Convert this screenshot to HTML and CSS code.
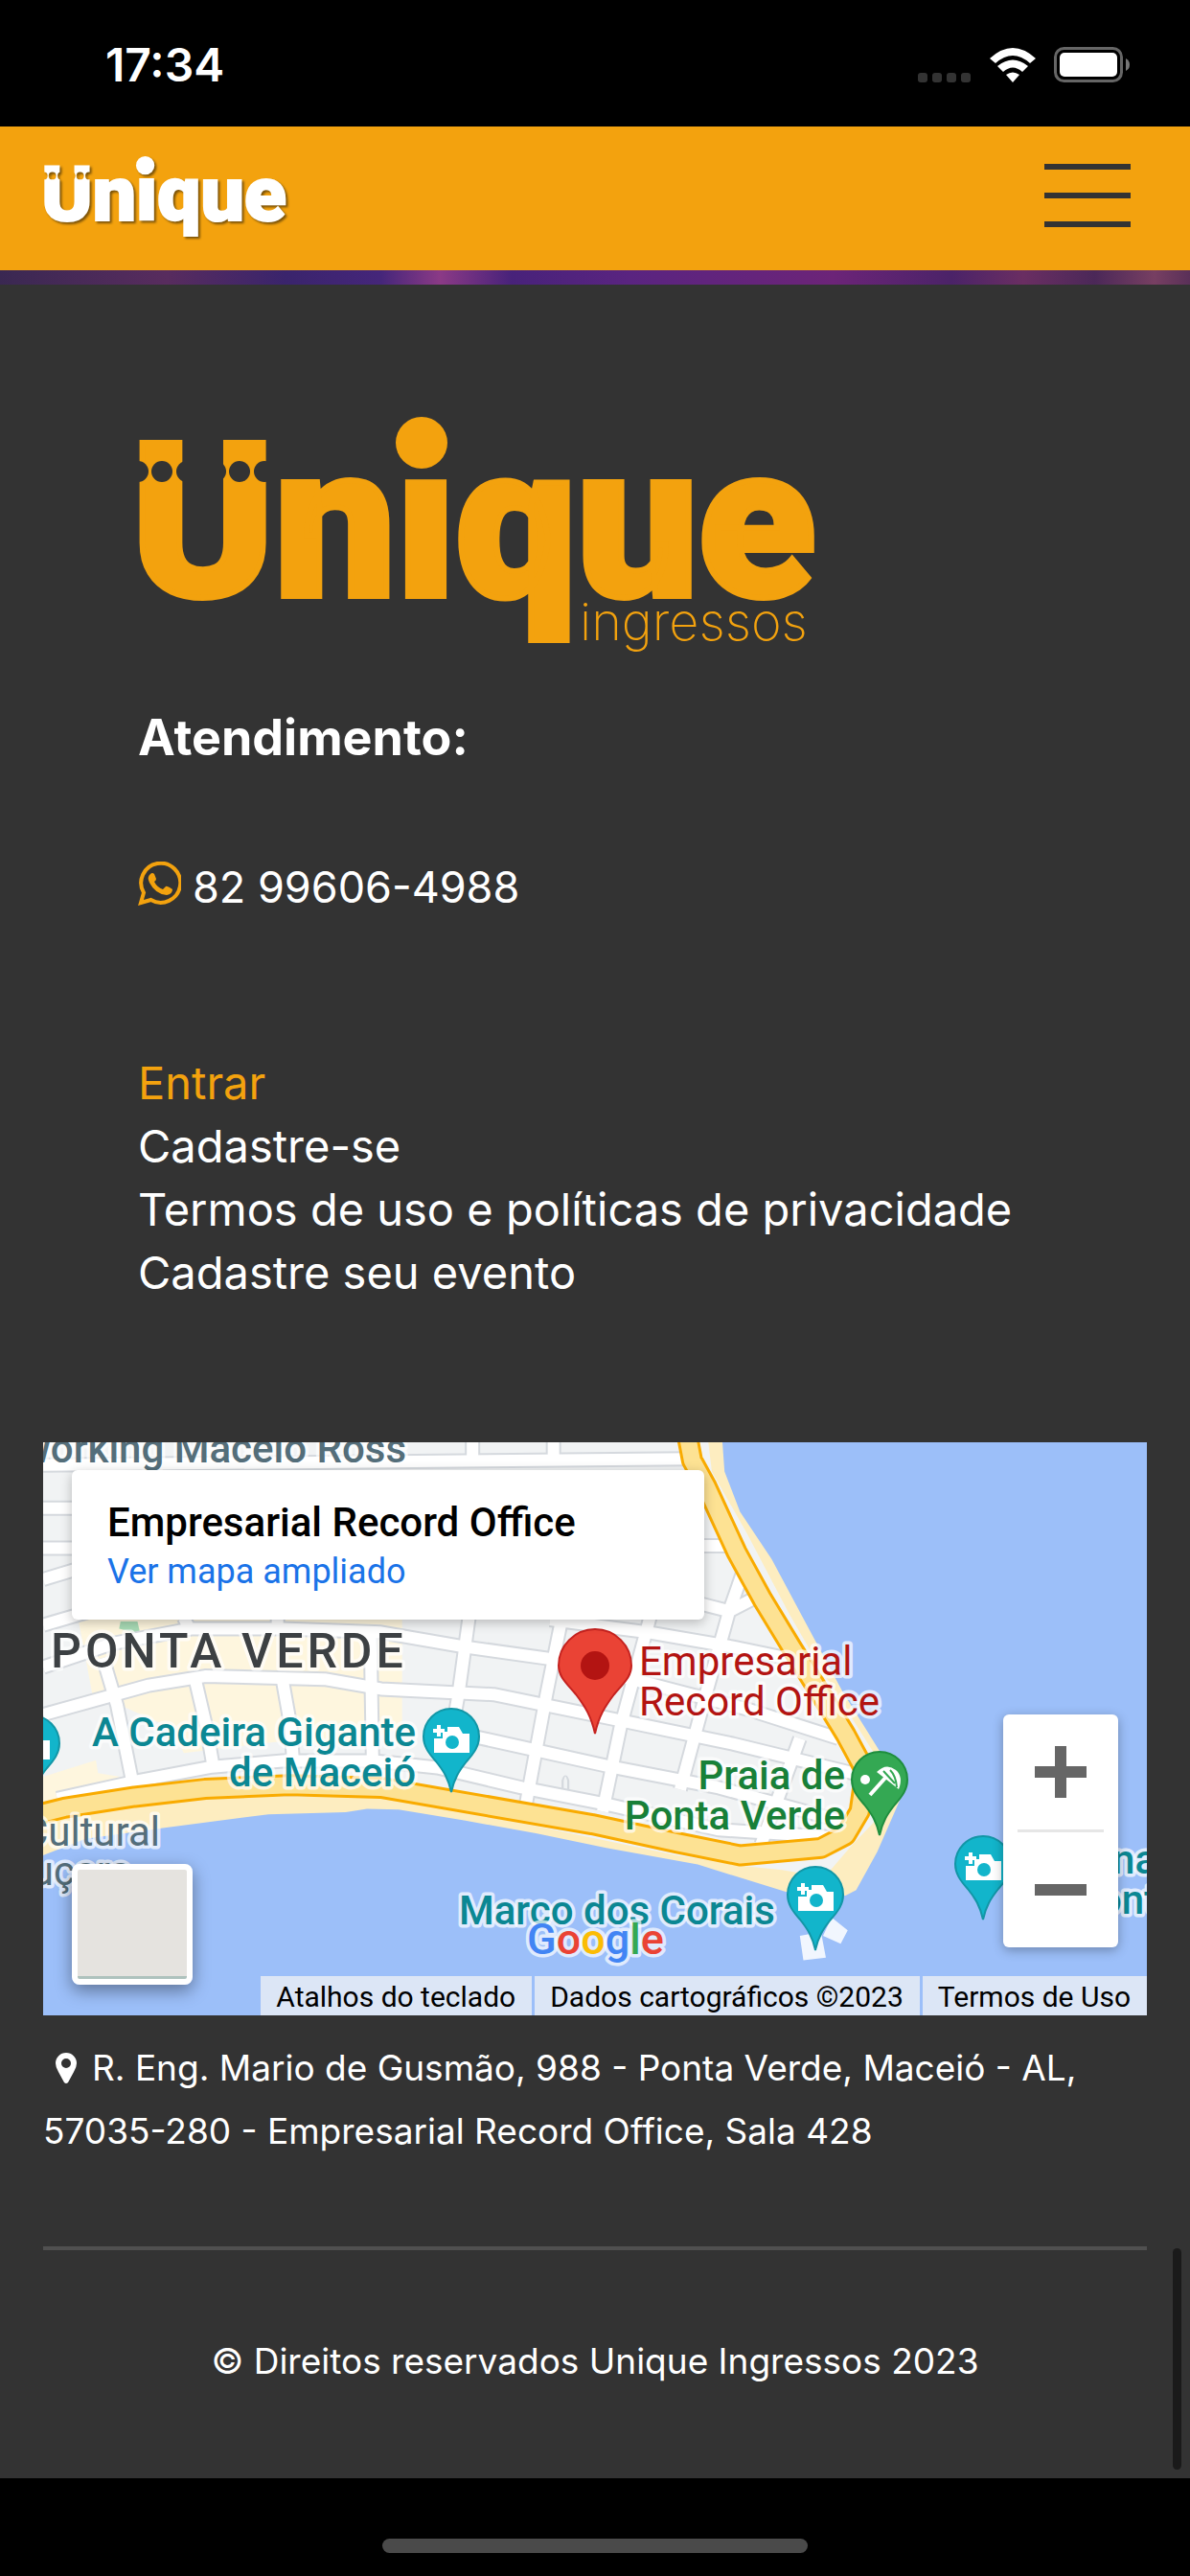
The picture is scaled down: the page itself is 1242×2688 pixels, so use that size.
FILE: index.html
```html
<!DOCTYPE html>
<html lang="pt-BR">
<head>
<meta charset="utf-8">
<meta name="viewport" content="width=device-width, initial-scale=1">
<title>Unique Ingressos</title>
<link rel="stylesheet" href="styles.css">
</head>
<body>
<div class="status">
  <span class="time">17:34</span>
  <div class="status-icons">
    <svg class="signal" viewBox="0 0 56 36" aria-hidden="true"><g fill="#333"><rect x="0" y="26" width="10" height="10" rx="3"/><rect x="15" y="26" width="10" height="10" rx="3"/><rect x="30" y="26" width="10" height="10" rx="3"/><rect x="45" y="26" width="10" height="10" rx="3"/></g></svg>
    <svg class="wifi" viewBox="0 0 48 36" aria-hidden="true"><g fill="#fff"><path d="M0 11Q24-11 48 11L42 16Q24 0 6 16Z"/><path d="M8 19Q24 6 40 19L34 25Q24 16 14 25Z"/><path d="M17 28Q24 23 31 28L24 36Z"/></g></svg>
    <svg class="battery" viewBox="0 0 80 38" aria-hidden="true"><rect x="1.500" y="1.500" width="69" height="34" rx="9" fill="none" stroke="#666" stroke-width="3"/><rect x="6" y="6" width="60" height="25" rx="5" fill="#fff"/><path d="M75 12q4 2 4 6.500t-4 6.500z" fill="#777"/></svg>
  </div>
</div>
<header class="topbar">
  <a class="brand" href="#" aria-label="Unique">
    <svg viewBox="0 0 706 246" aria-hidden="true">
      <mask id="cut-top" maskUnits="userSpaceOnUse" x="-10" y="-10" width="740" height="270">
        <rect x="-10" y="-10" width="740" height="270" fill="#fff"/>
        <g fill="#000"><rect x="256" y="0" width="74" height="64"/><circle cx="0" cy="57" r="11"/><circle cx="25" cy="57" r="11"/><circle cx="51" cy="57" r="11"/><circle cx="81" cy="57" r="11"/><circle cx="106" cy="57" r="11"/><circle cx="132" cy="57" r="11"/></g>
      </mask>
      <g fill="#fff" stroke="#fff"><text class="logo-word" x="-7" y="187" mask="url(#cut-top)">Unique</text><circle cx="296" cy="27" r="27" stroke="none"/></g>
    </svg>
  </a>
  <button class="menu" type="button" aria-label="Menu"><span></span><span></span><span></span></button>
</header>
<div class="banner"></div>
<footer class="footer">
  <section class="contact">
    <svg class="logo" viewBox="0 0 706 246" role="img" aria-label="Unique Ingressos">
      <g fill="#f3a20e"><text class="logo-word" x="-7" y="187" stroke="#f3a20e" mask="url(#cut-top)">Unique</text><circle cx="296" cy="27" r="27"/><text class="logo-sub" x="461" y="233">ingressos</text></g>
    </svg>
    <h2>Atendimento:</h2>
    <a class="phone" href="tel:82996064988">
      <svg viewBox="0 0 45 46" aria-hidden="true"><path d="M3 43l3-10.500A20.500 20.500 0 1 1 13.500 40Z" fill="none" stroke="#f3a20e" stroke-width="4"/><path d="M13 13q2-2 4 0l2 5q0 2-2 3 3 6 9 8l3-3q1-1 7 3 0 5-6 6Q18 34 12 22q-3-6 1-9z" fill="#f3a20e"/></svg>
      <span>82 99606-4988</span>
    </a>
    <nav class="links">
      <a class="active" href="#">Entrar</a>
      <a href="#">Cadastre-se</a>
      <a href="#">Termos de uso e políticas de privacidade</a>
      <a href="#">Cadastre seu evento</a>
    </nav>
  </section>
  <div class="map">
    <svg class="map-art" viewBox="0 0 1152 598" preserveAspectRatio="xMidYMid slice" aria-hidden="true">
      <defs>
        <path id="drop" d="M0 0C-3-14-8-22-16-32-24-41-29-48-29-58A29 29 0 1 1 29-58C29-48 24-41 16-32 8-22 3-14 0 0Z"/>
        <g id="photo-pin">
          <use href="#drop" fill="#12b5cb" stroke="#1296a6" stroke-width="2"/>
          <path d="M-15-70h4v4h4v4h-4v4h-4v-4h-4v-4h4z" fill="#fff"/>
          <path d="M-4-68H8l4 7h7v20h-37v-15h9v-7h5z" fill="#fff"/>
          <circle cx="1" cy="-52" r="7" fill="#12b5cb"/>
        </g>
        <g id="streets">
          <path class="wide" d="M0 62L915 45"/>
          <path d="M610 0V40M725 0V40M492 0V40M0 180H60M0 290H60M0 375L60 340M0 500L80 455"/>
          <path d="M920 283H975M995 350L975 460 940 700 905 950M920 435L975 462 1015 422"/>
          <path class="wide" d="M0 615L100 550 210 510 340 510 480 520 600 560 730 595 840 650 1000 730 1130 810"/>
          <path class="wide" d="M0 745L150 665 230 640 400 648 480 675 640 690 830 765 980 825 1150 905"/>
          <path d="M20 975L130 928 240 888 340 872 470 872 560 890 680 945 800 990 960 1060 1120 1080"/>
          <path d="M600 800L800 885 960 945 1140 1040M720 485L860 520 980 560 1080 600"/>
          <path d="M85 590L105 720 130 960M200 480L210 520M215 640L232 780 242 890M333 480V510M340 650L352 780 355 870M465 520L468 870M605 480L590 690 580 800M737 480L715 690 685 1000M862 480L820 780 795 1010M1075 810L1020 1100"/>
        </g>
        <path id="avenue" d="M915 -20L922 50 942 120 985 300 1022 430 1063 560 1105 690 1140 800 1168 900 1160 1010 1140 1075 1105 1110 990 1130 900 1095 780 1045 480 945 350 938 230 948 130 970 30 1000 -20 1024"/>
      </defs>
      <rect width="1152" height="598" fill="#9cbff9"/>
      <g class="ground" transform="scale(.7347 .3814)">
        <path d="M0 0H965L968 80 990 190 1035 320 1085 500 1135 680 1190 850 1228 930 1210 1010 1185 1120 1155 1225 1140 1240 1055 1230 930 1155 800 1110 700 1070 600 1035 505 1005 460 1003 430 1012 320 1018 170 1055 60 1085 0 1130Z" fill="#fdedc0"/>
        <path d="M0 0H945L950 80 1000 250 1060 470 1105 620 1190 880 1195 1010 1150 1100 1110 1190 1050 1170 1000 1160 900 1130 700 1050 480 970 230 970 0 1020Z" fill="#f1f3f4"/>
        <path d="M50 485H510V780L440 830 330 820 200 850 180 780 110 720 70 690ZM0 915L75 870 78 905 110 915 0 990Z" fill="#fef6de"/>
        <path d="M110 490h24l4 34-30-14z" fill="#a8dab5"/>
        <use href="#streets" class="casing"/>
        <path d="M738 975V925Q742 900 746 925V975" class="casing"/>
        <use href="#streets" class="street"/>
        <use href="#avenue" class="avenue-edge"/>
        <use href="#avenue" class="avenue"/>
        <path d="M1075 1350L1105 1340 1112 1410 1080 1417ZM1120 1300L1143 1335 1133 1372 1108 1350Z" fill="#f1f6fe"/>
      </g>
      <g class="pins">
        <use href="#photo-pin" x="-12" y="372"/>
        <use href="#photo-pin" x="426" y="365"/>
        <use href="#photo-pin" x="806" y="530"/>
        <use href="#photo-pin" x="981" y="498"/>
        <use href="#drop" x="873" y="410" fill="#34a853" stroke="#1e8e3e" stroke-width="2"/>
        <g fill="none" stroke="#fff"><path d="M863 368L880 349" stroke-width="4"/><path d="M870 344q10-10 20-2 8 7 3 20z" fill="#fff" stroke="none"/><path d="M877 343l12 13M884 342q6 6 7 18" stroke="#34a853" stroke-width="2"/></g>
        <circle cx="858" cy="352" r="5" fill="#fff"/>
        <path d="M576 304C572 286 566 276 556 263 545 250 538 244 538 233A38 38 0 0 1 614 233C614 244 607 250 596 263 586 276 580 286 576 304Z" fill="#ea4335" stroke="#c5221f" stroke-width="2"/>
        <circle cx="576" cy="233" r="15" fill="#b31412"/>
      </g>
      <g class="labels">
        <text class="slate strong" x="379" y="21" text-anchor="end">Coworking Maceió Ross</text>
        <text class="district" x="8" y="235">PONTA VERDE</text>
        <text class="teal strong" x="389" y="317" text-anchor="end">A Cadeira Gigante</text>
        <text class="teal strong" x="389" y="359" text-anchor="end">de Maceió</text>
        <text class="red" x="622" y="243">Empresarial</text>
        <text class="red" x="622" y="285">Record Office</text>
        <text class="green strong" x="837" y="362" text-anchor="end">Praia de</text>
        <text class="green strong" x="837" y="404" text-anchor="end">Ponta Verde</text>
        <text class="teal strong" x="434" y="503">Marco dos Corais</text>
        <text class="slate" x="122" y="421" text-anchor="end">Cultural</text>
        <text class="slate" x="92" y="462" text-anchor="end">Pajuçara</text>
        <text class="teal strong" x="1116" y="450">na</text>
        <text class="teal strong" x="1102" y="492">ont</text>
        <text class="google" x="505" y="534"><tspan fill="#4285f4">G</tspan><tspan fill="#ea4335">o</tspan><tspan fill="#fbbc04">o</tspan><tspan fill="#4285f4">g</tspan><tspan fill="#34a853">l</tspan><tspan fill="#ea4335">e</tspan></text>
      </g>
    </svg>
    <div class="place">
      <strong>Empresarial Record Office</strong>
      <a href="#">Ver mapa ampliado</a>
    </div>
    <button class="map-type" type="button" aria-label="Mostrar imagens de satélite"></button>
    <div class="zoom">
      <button type="button" aria-label="Aumentar o zoom"><svg viewBox="0 0 54 54" aria-hidden="true"><path d="M21 0h12v21h21v12H33v21H21V33H0V21h21z" fill="#666"/></svg></button>
      <button type="button" aria-label="Diminuir o zoom"><svg viewBox="0 0 54 54" aria-hidden="true"><path d="M0 21h54v12H0z" fill="#666"/></svg></button>
    </div>
    <div class="credits">
      <button type="button">Atalhos do teclado</button>
      <span>Dados cartográficos ©2023</span>
      <a href="#">Termos de Uso</a>
    </div>
  </div>
  <p class="address"><svg viewBox="0 0 22 32" aria-hidden="true"><path d="M11 0A11 11 0 0 1 22 11Q22 15 19 20L13 31q-2 2-4 0L3 20Q0 15 0 11A11 11 0 0 1 11 0Zm0 6a5 5 0 1 0 0 10 5 5 0 0 0 0-10Z" fill="#fff" fill-rule="evenodd"/></svg>R. Eng. Mario de Gusmão, 988 - Ponta Verde, Maceió - AL, 57035-280 - Empresarial Record Office, Sala 428</p>
  <hr>
  <p class="copyright">© Direitos reservados Unique Ingressos 2023</p>
  <span class="scroll-thumb"></span>
</footer>
<div class="home-area"><span></span></div>
</body>
</html>
```
FILE: styles.css
```css
* { box-sizing: border-box; }

body {
  margin: 0;
  min-height: 100vh;
  display: flex;
  flex-direction: column;
  background: #000;
  color: #fff;
  font-family: Inter, "Open Sans", sans-serif;
}

a { color: inherit; text-decoration: none; }
button { border: 0; padding: 0; background: none; font: inherit; color: inherit; }
svg { display: block; }
h2, p { margin: 0; }

.status {
  height: 132px;
  padding: 4px 62px 0 110px;
  display: flex;
  align-items: center;
  justify-content: space-between;
}
.time { font-size: 48px; font-weight: 600; line-height: 60px; }
.status-icons { display: flex; align-items: center; gap: 19px; }
.signal { width: 56px; height: 36px; }
.wifi { width: 48px; height: 36px; }
.battery { width: 80px; height: 38px; }

.topbar {
  height: 150px;
  padding: 0 62px 0 45px;
  display: flex;
  align-items: center;
  justify-content: space-between;
  background: #f3a20e;
}
.brand svg { width: 254px; height: 88px; overflow: visible; filter: drop-shadow(2px 2px 1px #7a5208); }
.menu { width: 90px; display: flex; flex-direction: column; gap: 24px; padding-bottom: 6px; }
.menu span { height: 6px; background: #333; }

.banner {
  height: 15px;
  background: linear-gradient(90deg, #3a2852, #582c5e 14%, #3a246c 24%, #45267a 32%, #8b3a86 37%, #48227a 43%, #5a2480 53%, #6c2478 70%, #4b2368 80%, #6a2e62 86%, #4b2858 92%, #773f62 97%, #5a3058);
}

.footer {
  position: relative;
  flex: 1;
  padding: 138px 45px 88px;
  background: #333;
}
.contact { padding: 0 99px 144px; display: flex; flex-direction: column; align-items: flex-start; }
.logo { width: 706px; max-width: 100%; overflow: visible; }
.logo-word { font: 900 225px Roboto, sans-serif; stroke-width: 6px; }
.logo-sub { font: 200 54px Inter, sans-serif; }
h2 { margin-top: 56px; font-size: 52px; font-weight: 700; line-height: 66px; }
.phone { margin-top: 90px; display: flex; align-items: center; gap: 12px; font-size: 45px; line-height: 66px; }
.phone svg { width: 45px; height: 46px; margin-bottom: 8px; }
.links { margin-top: 138px; display: flex; flex-direction: column; font-size: 47px; line-height: 66px; }
.links .active { color: #f3a20e; }

.map { position: relative; height: 598px; overflow: hidden; font-family: Roboto, sans-serif; }
.map-art { width: 100%; height: 100%; }
.ground { stroke-linejoin: round; }
.casing, .street, .avenue, .avenue-edge { fill: none; }
.casing { stroke: #d5d9de; stroke-width: 16px; }
.street { stroke: #fff; stroke-width: 12px; }
#streets path, #avenue { vector-effect: non-scaling-stroke; }
.casing:not(use) { stroke-width: 3px; }
.avenue-edge { stroke: #f9ab00; stroke-width: 23px; }
.avenue { stroke: #fde293; stroke-width: 17px; }
.labels { font-size: 42px; stroke: #fff; stroke-opacity: .7; stroke-width: 7px; stroke-linejoin: round; paint-order: stroke; }
.strong { font-weight: 500; }
.slate { fill: #546e7a; }
.teal { fill: #0b8793; }
.red { fill: #b31412; }
.green { fill: #188038; }
.district { fill: #3c4043; font-size: 50px; font-weight: 500; letter-spacing: 4px; }
.google { font-size: 45px; font-weight: 500; }

.place {
  position: absolute;
  left: 30px;
  top: 29px;
  width: 660px;
  padding: 30px 37px 29px;
  display: flex;
  flex-direction: column;
  align-items: flex-start;
  gap: 6px;
  border-radius: 6px;
  background: #fff;
  box-shadow: 0 3px 12px rgba(0, 0, 0, .25);
  color: #000;
}
.place strong { font-size: 42px; font-weight: 500; line-height: 49px; }
.place a { color: #1a73e8; font-size: 36px; line-height: 42px; }

.map-type {
  position: absolute;
  left: 30px;
  bottom: 32px;
  width: 126px;
  height: 126px;
  border: 6px solid #fff;
  border-radius: 8px;
  background: linear-gradient(#e5e3df 97%, #aec2bd 97%);
  box-shadow: 0 6px 18px rgba(0, 0, 0, .4);
}
.zoom {
  position: absolute;
  right: 30px;
  bottom: 71px;
  width: 120px;
  display: flex;
  flex-direction: column;
  align-items: center;
  border-radius: 6px;
  background: #fff;
  box-shadow: 0 3px 12px rgba(0, 0, 0, .3);
}
.zoom button { width: 90px; height: 120px; display: grid; place-items: center; }
.zoom button + button { height: 123px; border-top: 3px solid #e6e6e6; }
.zoom svg { width: 54px; height: 54px; }

.credits {
  position: absolute;
  right: 0;
  bottom: 0;
  display: flex;
  gap: 3px;
  color: #000;
  font-size: 30px;
  line-height: 39px;
}
.credits > * { padding: 2px 17px 0 16px; background: #dce6f6; }

.address { margin-top: 22px; font-size: 37px; line-height: 66px; }
.address svg { display: inline-block; width: 22px; height: 32px; margin: 0 16px 0 13px; vertical-align: -3px; }
hr { height: 4px; margin: 87px 0 83px; border: 0; background: #505050; }
.copyright { font-size: 37px; line-height: 66px; text-align: center; }
.scroll-thumb { position: absolute; right: 9px; bottom: 9px; width: 9px; height: 231px; border-radius: 5px; background: #1a1a1a; }

.home-area { height: 102px; display: flex; flex-direction: column; align-items: center; padding-top: 63px; }
.home-area span { width: 444px; height: 15px; border-radius: 8px; background: #4a4a4a; }
```
